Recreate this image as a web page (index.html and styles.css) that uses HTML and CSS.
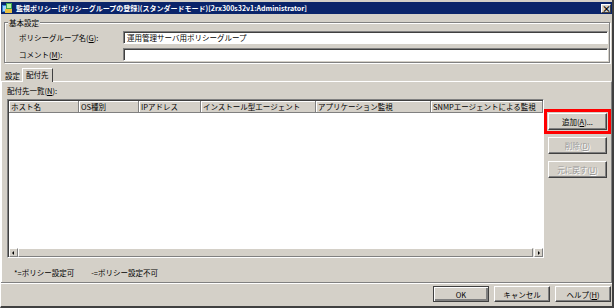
FILE: index.html
```html
<!DOCTYPE html>
<html lang="ja">
<head>
    <meta charset="UTF-8">
    <title>監視ポリシー</title>
    <link rel="stylesheet" href="styles.css">
</head>
<body>
<div class="window">
    <div class="titlebar">
        <svg class="app-icon" width="11" height="11" viewBox="0 0 11 11">
            <rect x="0" y="2" width="7" height="7" fill="#2f86d8"/>
            <rect x="1" y="3" width="5" height="5" fill="#9fd0ff"/>
            <rect x="4" y="0" width="6" height="6" fill="#3aa24a"/>
            <rect x="5" y="1" width="4" height="4" fill="#b8f0a0"/>
            <rect x="3" y="6" width="7" height="4" fill="#e8c040"/>
        </svg>
        <span class="title">監視ポリシー[ポリシーグループの登録](スタンダードモード)[2rx300s32v1:Administrator]</span>
        <span class="close-btn">×</span>
    </div>

    <div class="group">
        <span class="group-caption">基本設定</span>
        <div class="field-row">
            <label>ポリシーグループ名(<u>G</u>):</label>
            <div class="textbox">運用管理サーバ用ポリシーグループ</div>
        </div>
        <div class="field-row">
            <label>コメント(<u>M</u>):</label>
            <div class="textbox"></div>
        </div>
    </div>

    <div class="tabs">
        <span class="tab">設定</span>
        <span class="tab active">配付先</span>
    </div>

    <div class="tab-panel">
        <div class="list-label">配付先一覧(<u>N</u>):</div>
        <div class="list-area">
            <div class="listview">
                <div class="list-header">
                    <span class="col" style="width: 70px;">ホスト名</span>
                    <span class="col" style="width: 60px;">OS種別</span>
                    <span class="col" style="width: 62px;">IPアドレス</span>
                    <span class="col" style="width: 115px;">インストール型エージェント</span>
                    <span class="col" style="width: 115px;">アプリケーション監視</span>
                    <span class="col" style="width: 112px;">SNMPエージェントによる監視</span>
                </div>
                <div class="list-body"></div>
                <div class="hscroll">
                    <span class="sb-arrow left"></span>
                    <span class="sb-thumb"></span>
                    <span class="sb-arrow right"></span>
                </div>
            </div>
            <div class="side-buttons">
                <button class="btn highlight">追加(<u>A</u>)...</button>
                <button class="btn" disabled>削除(<u>D</u>)</button>
                <button class="btn" disabled>元に戻す(<u>U</u>)</button>
            </div>
        </div>
        <div class="legend-note">
            <span>*=ポリシー設定可</span>
            <span>-=ポリシー設定不可</span>
        </div>
    </div>

    <div class="footer">
        <button class="btn default">OK</button>
        <button class="btn">キャンセル</button>
        <button class="btn">ヘルプ(<u>H</u>)</button>
    </div>
</div>
</body>
</html>
```

FILE: styles.css
```css
body {
    margin: 0;
    padding: 0;
    background-color: #d4d0c8;
    font-family: "Noto Sans CJK JP", "DejaVu Sans", sans-serif;
    font-size: 7.5px;
    color: #000;
}

.window {
    width: 614px;
    height: 308px;
    box-sizing: border-box;
    display: flex;
    flex-direction: column;
    padding-top: 2px;
    border-left: 1px solid #ffffff;
    border-right: 2px solid #404040;
    border-bottom: 2px solid #404040;
    background-color: #d4d0c8;
}

/* title bar */
.titlebar {
    height: 12px;
    background-color: #0a246a;
    color: #fff;
    display: flex;
    align-items: center;
    padding: 0 1px;
    flex-shrink: 0;
}
.app-icon {
    margin-right: 3px;
}
.title {
    font-weight: bold;
    font-size: 7px;
    line-height: 12px;
    white-space: nowrap;
    flex: 1;
}
.close-btn {
    width: 10px;
    height: 9px;
    box-sizing: border-box;
    background-color: #d4d0c8;
    color: #000;
    font-size: 9px;
    line-height: 8px;
    text-align: center;
    font-weight: bold;
    border: 1px solid;
    border-color: #fff #404040 #404040 #fff;
}

/* group box */
.group {
    margin: 8px 2px 0 3px;
    border: 1px solid #808080;
    box-shadow: inset 1px 1px #fff, 1px 1px #fff;
    padding: 0 1px 1px 14px;
    display: flex;
    flex-direction: column;
    gap: 4px;
}
.group-caption {
    align-self: flex-start;
    margin: -5px 0 0 -11px;
    padding: 0 1px;
    background-color: #d4d0c8;
    line-height: 9px;
}
.field-row {
    display: flex;
    align-items: center;
}
.field-row label {
    flex: 0 0 104px;
    line-height: 9px;
}
.textbox {
    flex: 1;
    height: 13px;
    box-sizing: border-box;
    background-color: #fff;
    border: 1px solid;
    border-color: #808080 #fff #fff #808080;
    box-shadow: inset 1px 1px #404040;
    padding-left: 3px;
    line-height: 11px;
}

/* tabs */
.tabs {
    display: flex;
    align-items: flex-end;
    height: 13px;
    margin-top: 5px;
    padding-left: 2px;
    flex-shrink: 0;
}
.tab {
    line-height: 10px;
    padding: 0 2px;
}
.tab.active {
    line-height: 12px;
    padding: 0 3px 1px 3px;
    border-left: 1px solid #fff;
    border-top: 1px solid #fff;
    border-right: 1px solid #404040;
    margin-bottom: -1px;
    background-color: #d4d0c8;
    position: relative;
}

.tab-panel {
    flex: 1;
    display: flex;
    flex-direction: column;
    border-top: 1px solid #fff;
    border-left: 1px solid #fff;
    border-right: 1px solid #808080;
    padding: 4px 4px 5px 5px;
}
.list-label {
    line-height: 9px;
    margin-bottom: 4px;
}
.list-area {
    flex: 1;
    display: flex;
    gap: 4px;
}

/* list view */
.listview {
    flex: 1;
    display: flex;
    flex-direction: column;
    background-color: #fff;
    border: 1px solid;
    border-color: #808080 #fff #fff #808080;
    box-shadow: inset 1px 1px #404040;
    padding: 1px 0 0 1px;
}
.list-header {
    display: flex;
    height: 12px;
}
.col {
    flex-shrink: 0;
    box-sizing: border-box;
    background-color: #d4d0c8;
    border-right: 1px solid #808080;
    border-bottom: 1px solid #808080;
    box-shadow: inset 1px 1px #fff;
    padding-left: 2px;
    line-height: 11px;
    white-space: nowrap;
    overflow: hidden;
}
.list-body {
    flex: 1;
}
.hscroll {
    display: flex;
    height: 9px;
    background-color: #e4e2dc;
}
.sb-arrow, .sb-thumb {
    box-sizing: border-box;
    height: 9px;
    background-color: #d4d0c8;
    border: 1px solid;
    border-color: #fff #808080 #808080 #fff;
    position: relative;
}
.sb-arrow {
    width: 9px;
}
.sb-thumb {
    flex: 1;
    margin-right: 1px;
}
.sb-arrow::after {
    content: "";
    position: absolute;
    top: 2px;
    left: 2px;
    border-top: 2px solid transparent;
    border-bottom: 2px solid transparent;
}
.sb-arrow.left::after {
    border-right: 2px solid #000;
}
.sb-arrow.right::after {
    left: 3px;
    border-left: 2px solid #000;
}

/* buttons */
.side-buttons {
    width: 59px;
    display: flex;
    flex-direction: column;
    gap: 7px;
    padding-top: 14px;
}
.btn {
    font-family: inherit;
    font-size: 7.5px;
    height: 17px;
    padding: 0;
    background-color: #d4d0c8;
    color: #000;
    border: 1px solid;
    border-color: #fff #404040 #404040 #fff;
    box-shadow: inset -1px -1px #808080;
    cursor: default;
}
.btn:disabled {
    color: #989898;
    text-shadow: 1px 1px #fff;
}
.btn.highlight {
    outline: 3px solid #ff0000;
    outline-offset: 1px;
}

.legend-note {
    display: flex;
    gap: 17px;
    margin-top: 10px;
    padding-left: 7px;
    line-height: 9px;
}

/* footer */
.footer {
    height: 24px;
    box-sizing: border-box;
    flex-shrink: 0;
    display: flex;
    justify-content: flex-end;
    align-items: flex-start;
    gap: 5px;
    border-top: 1px solid #808080;
    box-shadow: inset 0 1px #fff;
    padding: 3px 1px 0 0;
}
.footer .btn {
    width: 56px;
    height: 16px;
}
.footer .btn.default {
    border-color: #404040;
    box-shadow: inset 1px 1px #fff, inset -2px -2px #808080;
}
```
